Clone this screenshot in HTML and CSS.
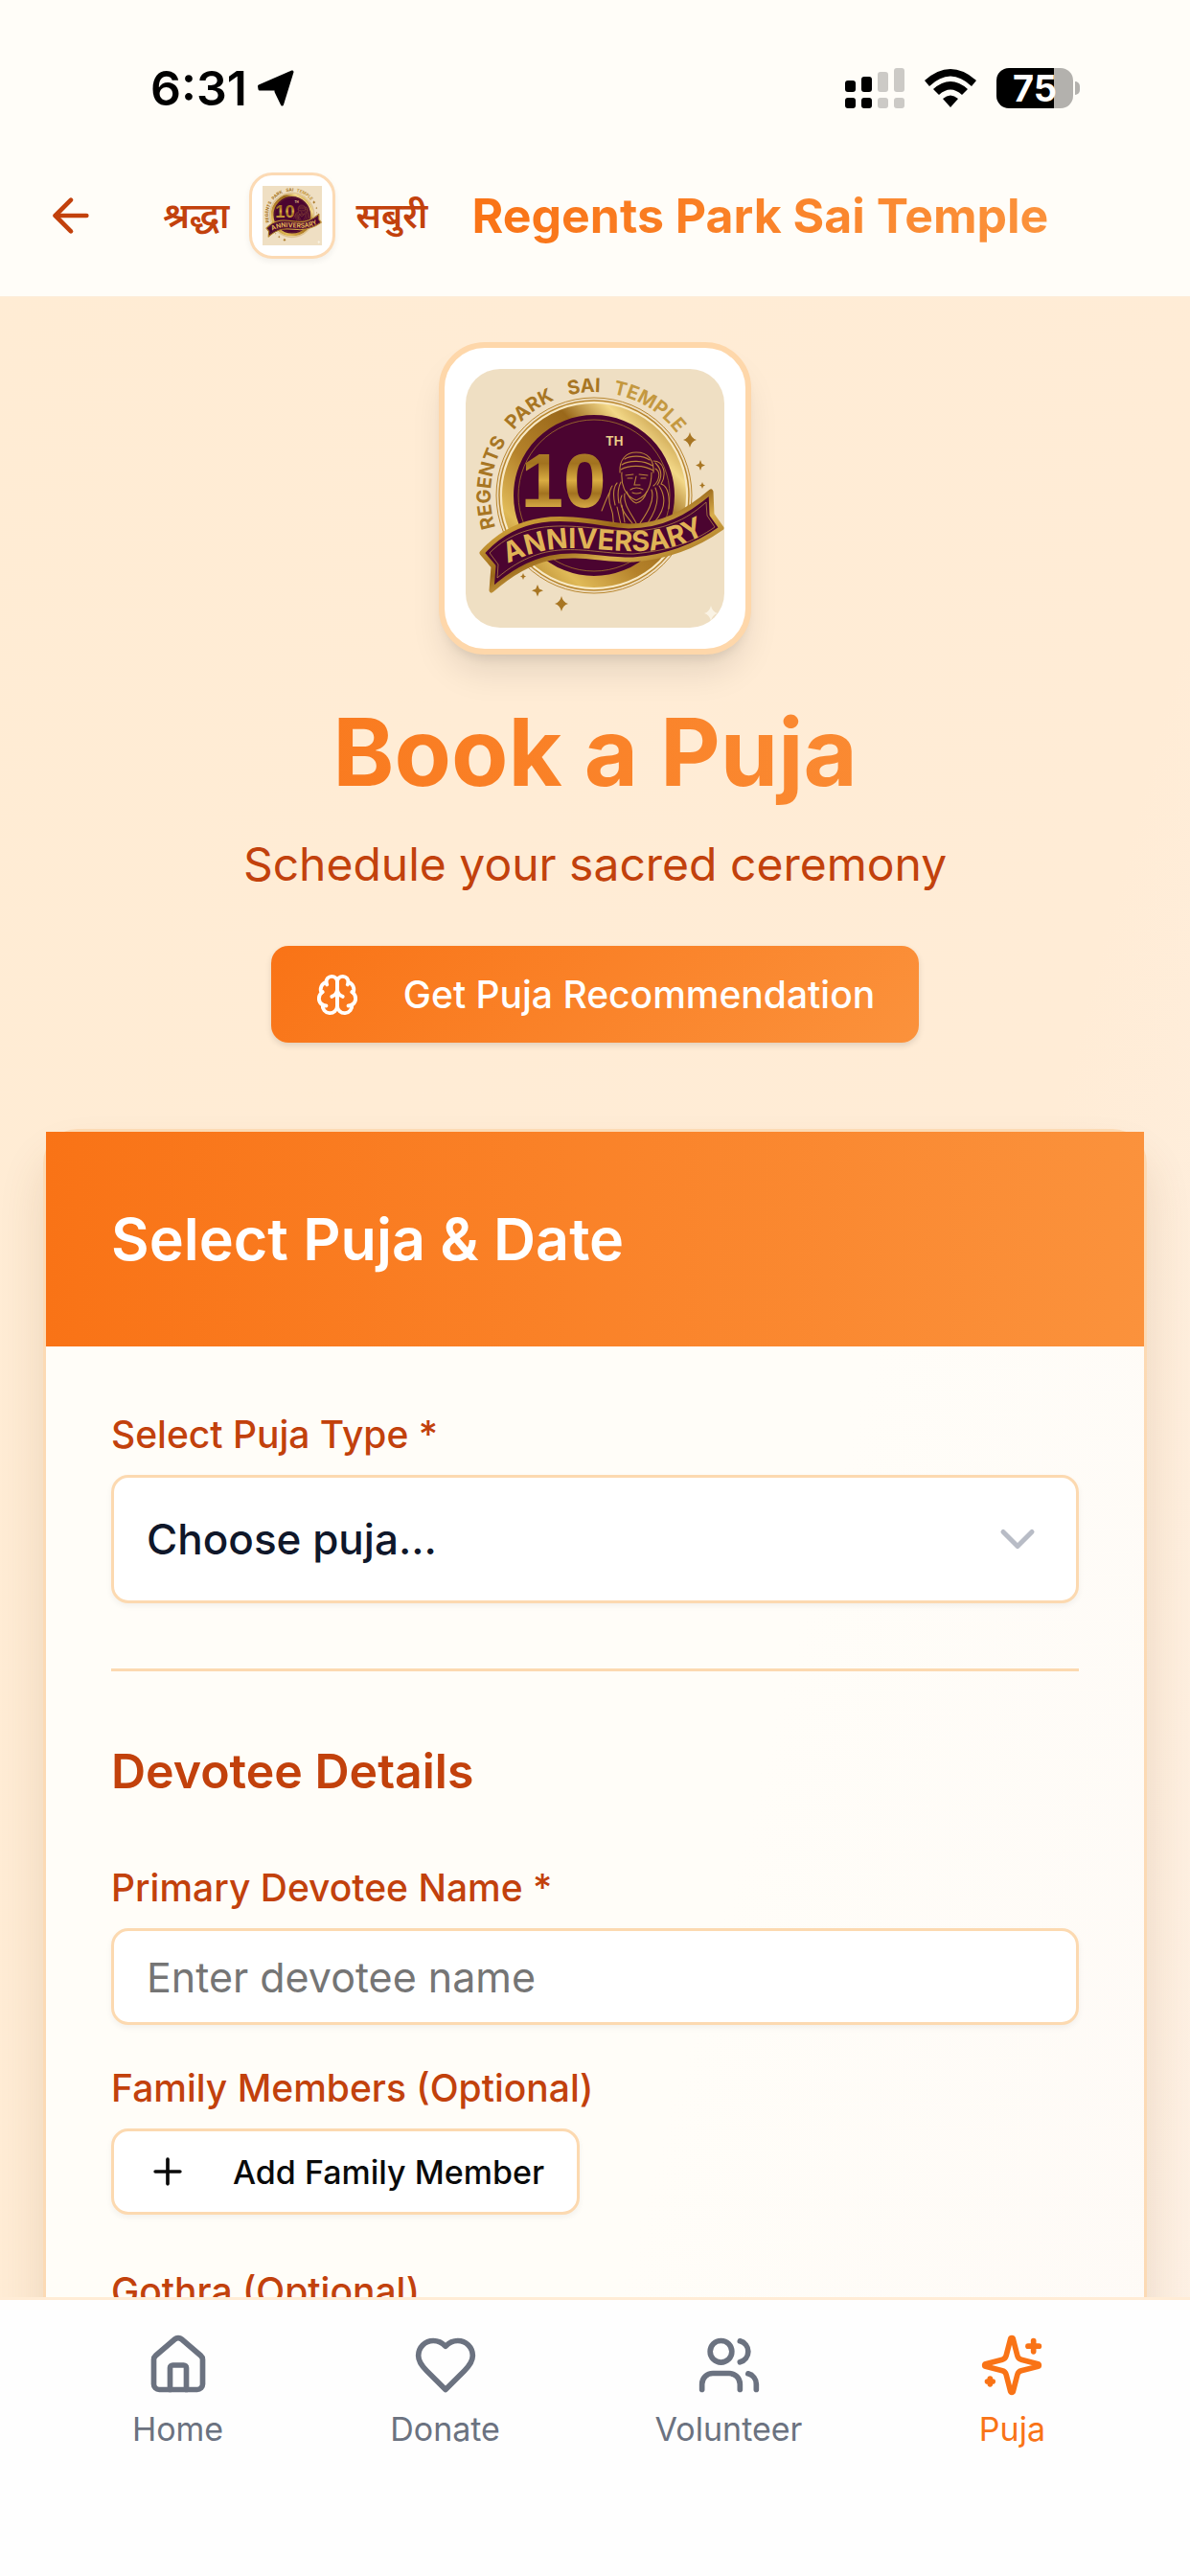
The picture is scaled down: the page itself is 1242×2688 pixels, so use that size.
FILE: index.html
```html
<!DOCTYPE html>
<html lang="en">
<head>
    <meta charset="UTF-8">
    <meta name="viewport" content="width=device-width, initial-scale=1.0">
    <title>Book a Puja - Regents Park Sai Temple</title>
    <link rel="stylesheet" href="styles.css">
</head>
<body>
    <header class="app-header">
        <div class="status-bar">
            <div class="status-left">
                <span class="time">6:31</span>
                <svg class="location" viewBox="0 0 40 40"><path d="M37 3L26.500 37L20 23.500V21H3L2.500 18Z" fill="#000" stroke="#000" stroke-width="3" stroke-linejoin="round"/></svg>
            </div>
            <div class="status-right">
                <svg class="signal" viewBox="0 0 62 42">
                    <g fill="#000">
                        <rect y="13" width="11" height="12" rx="3"/><rect x="17" y="9" width="11" height="16" rx="3"/>
                        <rect y="31" width="11" height="11" rx="3"/><rect x="17" y="31" width="11" height="11" rx="3"/>
                    </g>
                    <g fill="#cccac6">
                        <rect x="34" y="4" width="11" height="21" rx="3"/><rect x="51" width="11" height="25" rx="3"/>
                        <rect x="34" y="31" width="11" height="11" rx="3"/><rect x="51" y="31" width="11" height="11" rx="3"/>
                    </g>
                </svg>
                <svg class="wifi" viewBox="0 0 54 40">
                    <path d="M0 12Q27-12 54 12L49 18Q27-3 5 18ZM9 21Q27 5 45 21L39 27Q27 16 15 27ZM19 31Q27 24 35 31L27 40Z"/>
                </svg>
                <div class="battery"><span class="battery-level">75</span></div>
            </div>
        </div>
        <div class="header-row">
            <button class="back" type="button" aria-label="Back">
                <svg class="icon" viewBox="0 0 24 24"><path d="m12 19-7-7 7-7"/><path d="M19 12H5"/></svg>
            </button>
            <div class="brand">
                <span class="motto" lang="hi">श्रद्धा</span>
                <span class="brand-logo"><svg viewBox="0 0 270 270"><use href="#logo"/></svg></span>
                <span class="motto" lang="hi">सबुरी</span>
            </div>
            <span class="temple-name">Regents Park Sai Temple</span>
        </div>
    </header>

    <main class="content">
        <section class="hero">
            <div class="hero-logo">
                <svg viewBox="0 0 270 270" role="img" aria-label="Regents Park Sai Temple 10th Anniversary">
                    <defs>
                        <linearGradient id="gold" x1="0" y1="0" x2="1" y2="1">
                            <stop offset="0" stop-color="#a87420"/>
                            <stop offset="0.25" stop-color="#c99a35"/>
                            <stop offset="0.45" stop-color="#9a681a"/>
                            <stop offset="0.6" stop-color="#d9ae4c"/>
                            <stop offset="0.8" stop-color="#a06f1c"/>
                            <stop offset="1" stop-color="#c4952f"/>
                        </linearGradient>
                        <linearGradient id="goldRing" x1="0" y1="1" x2="1" y2="0">
                            <stop offset="0" stop-color="#a5731d"/>
                            <stop offset="0.2" stop-color="#e0ba58"/>
                            <stop offset="0.4" stop-color="#b5822a"/>
                            <stop offset="0.65" stop-color="#9a681a"/>
                            <stop offset="0.8" stop-color="#f3d888"/>
                            <stop offset="1" stop-color="#a5731d"/>
                        </linearGradient>
                        <linearGradient id="goldNumber" x1="0" y1="0" x2="0" y2="1">
                            <stop offset="0" stop-color="#b98b34"/>
                            <stop offset="0.3" stop-color="#a2721f"/>
                            <stop offset="0.5" stop-color="#d9ac42"/>
                            <stop offset="0.65" stop-color="#a2721f"/>
                            <stop offset="0.85" stop-color="#e0b54c"/>
                            <stop offset="1" stop-color="#b08029"/>
                        </linearGradient>
                        <path id="nameArc" d="M32.500 169A108 108 0 1 1 235.500 169"/>
                        <path id="ribbonLine" d="M46 202C88 182 120 187 150 189C185 192 215 190 248 173"/>
                        <path id="star" d="M0-8Q1.500-1.500 7 0Q1.500 1.500 0 8Q-1.500 1.500-7 0Q-1.500-1.500 0-8Z"/>
                    </defs>
                    <g id="logo">
                        <rect width="270" height="270" fill="#efdfc3"/>
                        <circle cx="134" cy="132" r="99" fill="#f8e9c4" stroke="#b8862f" stroke-width="1.500"/>
                        <circle cx="134" cy="132" r="102" fill="none" stroke="#b8862f"/>
                        <circle cx="134" cy="132" r="90" fill="#4b0430" stroke="url(#goldRing)" stroke-width="12"/>
                        <circle cx="134" cy="132" r="79" fill="none" stroke="#a5762c" stroke-width="0.800"/>
                        <g class="logo-name" fill="#a87623">
                            <text text-anchor="middle"><textPath href="#nameArc" startOffset="51">REGENTS</textPath></text>
                            <text text-anchor="middle"><textPath href="#nameArc" startOffset="138">PARK</textPath></text>
                            <text text-anchor="middle"><textPath href="#nameArc" startOffset="197">SAI</textPath></text>
                            <text text-anchor="middle" fill="#c4983f"><textPath href="#nameArc" startOffset="267">TEMPLE</textPath></text>
                        </g>
                        <text class="logo-number" x="102" y="144" text-anchor="middle" fill="url(#goldNumber)">10</text>
                        <text class="logo-th" x="146" y="80" fill="#ecd08a">TH</text>
                        <g fill="none" stroke="#b98339" stroke-width="1.100" stroke-linecap="round">
                            <path d="M161 108C160 94 168 87 178 87C190 87 197 95 196 108"/>
                            <path d="M163 100C170 95 186 95 195 101M162 105C170 100 186 100 196 106M166 94C172 90 185 90 192 95"/>
                            <path d="M163 108C162 122 167 133 178 137C189 133 194 122 194 108"/>
                            <path d="M167 111L175 110M181 110L190 111M169 114H174M183 114H188M178 112L176 121H182M172 126Q178 122 185 126M174 129Q178 131 183 129"/>
                            <path d="M168 128Q172 138 178 140Q186 138 189 128"/>
                            <path d="M196 96C207 96 210 110 204 120C212 122 213 136 212 146M198 104C205 108 201 118 196 122M198 98C204 104 206 112 200 121"/>
                            <path d="M163 132C158 142 168 154 174 161M166 130C164 142 174 152 178 161M194 126C198 138 188 152 182 161M198 124C204 138 196 152 190 161M202 122C212 138 204 152 197 160"/>
                            <path d="M152 146C148 136 150 126 153 122M156 142C153 130 155 122 158 119M160 140C158 130 160 122 162 118M146 138L150 129M152 146C156 156 152 160 156 164M158 144L162 162M163 142L166 160M142 148L146 138"/>
                        </g>
                        <path d="M17 192C65 138 125 161 170 164C205 164 230 150 256 128L257 152L267 166C243 183 215 196 175 199C125 200 88 177 27 231L29 206Z" fill="#4b0430" stroke="url(#gold)" stroke-width="5" stroke-linejoin="round"/>
                        <path d="M25 192C68 149 125 168 170 169C206 169 230 158 251 139L252 153L260 165C237 181 215 189 175 193C125 193 86 173 33 218L34 204Z" fill="none" stroke="#b08043" stroke-width="0.800"/>
                        <text class="logo-ribbon" fill="#e0b356" text-anchor="middle"><textPath href="#ribbonLine" startOffset="50%">ANNIVERSARY</textPath></text>
                        <g fill="#a87623">
                            <use href="#star" x="234" y="74"/>
                            <path d="M245 95l1.500 4 3.500 1.500-3.500 1.500-1.500 4-1.500-4-3.500-1.500 3.500-1.500z"/>
                            <path d="M247 118l1 2.500 2 1-2 1-1 2.500-1-2.500-2-1 2-1z"/>
                            <use href="#star" x="100" y="245"/>
                            <path d="M75 225l1.800 4.500 4.200 1.800-4.200 1.800-1.800 4.500-1.800-4.500-4.200-1.800 4.200-1.800z"/>
                            <path d="M60 213l1 2.500 2 1-2 1-1 2.500-1-2.500-2-1 2-1z"/>
                        </g>
                        <use href="#star" x="256" y="255" fill="#faf3e4"/>
                    </g>
                </svg>
            </div>
            <h1>Book a Puja</h1>
            <p>Schedule your sacred ceremony</p>
            <button class="recommend" type="button">
                <svg class="icon" viewBox="0 0 24 24">
                    <path d="M12 5a3 3 0 1 0-5.997.125 4 4 0 0 0-2.526 5.770 4 4 0 0 0 .556 6.588A4 4 0 1 0 12 18Z"/>
                    <path d="M12 5a3 3 0 1 1 5.997.125 4 4 0 0 1 2.526 5.770 4 4 0 0 1-.556 6.588A4 4 0 1 1 12 18Z"/>
                    <path d="M15 13a4.500 4.500 0 0 1-3-4 4.500 4.500 0 0 1-3 4"/>
                    <path d="M17.599 6.500a3 3 0 0 0 .399-1.375"/><path d="M6.003 5.125A3 3 0 0 0 6.401 6.500"/>
                    <path d="M3.477 10.896a4 4 0 0 1 .585-.396"/><path d="M19.938 10.500a4 4 0 0 1 .585.396"/>
                    <path d="M6 18a4 4 0 0 1-1.967-.516"/><path d="M19.967 17.484A4 4 0 0 1 18 18"/>
                </svg>
                Get Puja Recommendation
            </button>
        </section>

        <form class="card">
            <h2 class="card-header">Select Puja &amp; Date</h2>
            <div class="card-body">
                <label for="pujaType">Select Puja Type *</label>
                <div class="select-wrap">
                    <select id="pujaType" name="pujaType" required>
                        <option value="">Choose puja...</option>
                    </select>
                    <svg class="icon chevron" viewBox="0 0 24 24"><path d="m6 9 6 6 6-6"/></svg>
                </div>
                <hr>
                <h3>Devotee Details</h3>
                <label for="devoteeName">Primary Devotee Name *</label>
                <input type="text" id="devoteeName" name="devoteeName" placeholder="Enter devotee name" required>
                <label for="addMember">Family Members (Optional)</label>
                <button class="add-member" id="addMember" type="button">
                    <svg class="icon" viewBox="0 0 24 24"><path d="M5 12h14"/><path d="M12 5v14"/></svg>
                    Add Family Member
                </button>
                <label for="gothra">Gothra (Optional)</label>
                <input type="text" id="gothra" name="gothra">
            </div>
        </form>
    </main>

    <nav class="bottom-nav">
        <a href="#home">
            <svg class="icon" viewBox="0 0 24 24"><path d="M15 21v-8a1 1 0 0 0-1-1h-4a1 1 0 0 0-1 1v8"/><path d="M3 10a2 2 0 0 1 .709-1.528l7-5.999a2 2 0 0 1 2.582 0l7 5.999A2 2 0 0 1 21 10v9a2 2 0 0 1-2 2H5a2 2 0 0 1-2-2z"/></svg>
            Home
        </a>
        <a href="#donate">
            <svg class="icon" viewBox="0 0 24 24"><path d="M19 14c1.490-1.460 3-3.210 3-5.500A5.500 5.500 0 0 0 16.500 3c-1.760 0-3 .5-4.500 2-1.500-1.500-2.740-2-4.500-2A5.500 5.500 0 0 0 2 8.500c0 2.300 1.500 4.050 3 5.500l7 7Z"/></svg>
            Donate
        </a>
        <a href="#volunteer">
            <svg class="icon" viewBox="0 0 24 24"><path d="M16 21v-2a4 4 0 0 0-4-4H6a4 4 0 0 0-4 4v2"/><circle cx="9" cy="7" r="4"/><path d="M22 21v-2a4 4 0 0 0-3-3.870"/><path d="M16 3.130a4 4 0 0 1 0 7.750"/></svg>
            Volunteer
        </a>
        <a href="#puja" class="active">
            <svg class="icon" viewBox="0 0 24 24"><path d="M9.937 15.500A2 2 0 0 0 8.500 14.063l-6.135-1.582a.5.5 0 0 1 0-.962L8.500 9.936A2 2 0 0 0 9.937 8.500l1.582-6.135a.5.5 0 0 1 .963 0L14.063 8.500A2 2 0 0 0 15.500 9.937l6.135 1.581a.5.5 0 0 1 0 .964L15.500 14.063a2 2 0 0 0-1.437 1.437l-1.582 6.135a.5.5 0 0 1-.963 0z"/><path d="M20 3v4"/><path d="M22 5h-4"/><path d="M4 17v2"/><path d="M5 18H3"/></svg>
            Puja
        </a>
    </nav>
</body>
</html>
```
FILE: styles.css
```css
* {
    box-sizing: border-box;
}
body {
    margin: 0;
    height: 100vh;
    display: flex;
    flex-direction: column;
    font-family: Inter, "Noto Sans Devanagari", sans-serif;
    background: linear-gradient(105deg, #ffecd4 0%, #ffecd6 72%, #fdf1e6 100%);
    color: #c2410c;
}
h1, h2, h3, p {
    margin: 0;
}
button, input, select {
    font-family: inherit;
}
.icon {
    flex: none;
    fill: none;
    stroke: currentColor;
    stroke-width: 2;
    stroke-linecap: round;
    stroke-linejoin: round;
}

/* Header */
.app-header {
    flex: none;
    background: #fffdf8;
    border-bottom: 1px solid #fdeedb;
}
.status-bar {
    display: flex;
    justify-content: space-between;
    align-items: center;
    padding: 62px 115px 19px 157px;
    color: #000;
}
.status-left, .status-right {
    display: flex;
    align-items: center;
    height: 60px;
}
.status-left {
    gap: 10px;
}
.status-right {
    gap: 21px;
}
.time {
    font-size: 50px;
    font-weight: 600;
    line-height: 60px;
}
.location {
    width: 40px;
    height: 40px;
}
.signal {
    width: 62px;
    height: 42px;
}
.wifi {
    width: 54px;
    height: 40px;
}
.battery {
    display: flex;
    align-items: center;
    gap: 2px;
}
.battery::after {
    content: "";
    width: 5px;
    height: 14px;
    border-radius: 0 5px 5px 0;
    background: #b3b1ad;
}
.battery-level {
    width: 80px;
    border-radius: 13px;
    background: linear-gradient(90deg, #000 75%, #b3b1ad 75%);
    color: #fff;
    font-size: 38px;
    font-weight: 700;
    line-height: 42px;
    text-align: center;
}
.header-row {
    display: flex;
    align-items: center;
    padding: 39px 46px;
}
.back {
    display: flex;
    padding: 0;
    border: 0;
    background: none;
    color: #c2410c;
}
.back svg {
    width: 56px;
    height: 56px;
}
.brand {
    display: flex;
    align-items: center;
    gap: 21px;
    margin: 0 46px 0 68px;
}
.motto {
    font-size: 37px;
    font-weight: 600;
    line-height: 60px;
}
.brand-logo {
    display: flex;
    padding: 11px;
    border: 3px solid #fcdab4;
    border-radius: 24px;
    background: #fff;
    box-shadow: 0 3px 6px rgba(0, 0, 0, 0.06);
}
.brand-logo svg {
    width: 62px;
    height: 62px;
}
.temple-name {
    font-size: 50px;
    font-weight: 700;
    line-height: 60px;
    white-space: nowrap;
    background: linear-gradient(90deg, #f97316, #fb923c);
    -webkit-background-clip: text;
    background-clip: text;
    color: transparent;
}

/* Content */
.content {
    flex: 1;
    min-height: 0;
    overflow: hidden;
    padding: 47px 45px 0;
}
.hero {
    display: flex;
    flex-direction: column;
    align-items: center;
}
.hero-logo {
    display: flex;
    padding: 22px;
    border: 6px solid #fed7aa;
    border-radius: 48px;
    background: #fff;
    box-shadow: 0 24px 36px -6px rgba(0, 0, 0, 0.1), 0 9px 12px -6px rgba(0, 0, 0, 0.1);
}
.hero-logo svg {
    width: 270px;
    height: 270px;
    border-radius: 36px;
}
h1 {
    align-self: stretch;
    margin-top: 42px;
    font-size: 97px;
    font-weight: 700;
    line-height: 120px;
    text-align: center;
    background: linear-gradient(90deg, #f97316, #fb923c);
    -webkit-background-clip: text;
    background-clip: text;
    color: transparent;
}
.hero p {
    margin: 21px 0 49px;
    font-size: 48px;
    line-height: 72px;
}
.recommend {
    display: flex;
    align-items: center;
    gap: 46px;
    height: 101px;
    padding: 0 46px;
    border: 0;
    border-radius: 18px;
    background: linear-gradient(135deg, #f97316, #fb923c);
    box-shadow: 0 3px 6px rgba(0, 0, 0, 0.12);
    color: #fff;
    font-size: 39px;
    font-weight: 500;
}
.recommend svg {
    width: 46px;
    height: 46px;
}

/* Booking card */
.card {
    margin-top: 90px;
    border: 3px solid #fcdab4;
    border-radius: 36px;
    background: linear-gradient(105deg, #fffdf8 60%, #fefaf6);
    box-shadow: 0 30px 48px rgba(120, 70, 20, 0.14);
}
.card-header {
    padding: 72px 68px;
    background: linear-gradient(90deg, #f97316, #fb923c);
    color: #fff;
    font-size: 61px;
    font-weight: 600;
    line-height: 80px;
}
.card-body {
    display: flex;
    flex-direction: column;
    padding: 62px 68px;
}
label {
    font-size: 39px;
    font-weight: 500;
    line-height: 60px;
    margin-bottom: 12px;
}
select, input, .add-member {
    border: 3px solid #fcd9b0;
    border-radius: 18px;
    background: #fff;
    box-shadow: 0 3px 6px rgba(0, 0, 0, 0.05);
}
.select-wrap {
    display: grid;
    align-items: center;
}
.select-wrap > * {
    grid-area: 1 / 1;
}
select {
    appearance: none;
    width: 100%;
    height: 134px;
    padding: 0 34px;
    color: #0f172a;
    font-size: 44px;
    font-weight: 500;
}
.chevron {
    justify-self: end;
    width: 60px;
    height: 60px;
    margin-right: 34px;
    color: #b8bcc6;
    pointer-events: none;
}
hr {
    width: 100%;
    height: 3px;
    margin: 68px 0;
    border: 0;
    background: #fcd9b0;
}
h3 {
    margin-bottom: 56px;
    font-size: 50px;
    font-weight: 600;
    line-height: 72px;
}
input {
    height: 101px;
    margin-bottom: 36px;
    padding: 0 34px;
    font-size: 43px;
}
input::placeholder {
    color: #757575;
}
.add-member {
    align-self: flex-start;
    display: flex;
    align-items: center;
    gap: 46px;
    height: 90px;
    margin-bottom: 50px;
    padding: 0 34px;
    color: #0a0a0a;
    font-size: 34px;
    font-weight: 500;
}
.add-member svg {
    width: 44px;
    height: 44px;
}

/* Bottom navigation */
.bottom-nav {
    flex: none;
    display: flex;
    justify-content: space-around;
    padding: 34px 46px 129px;
    border-top: 3px solid #ffecd6;
    background: #fefefe;
}
.bottom-nav a {
    display: flex;
    flex-direction: column;
    align-items: center;
    gap: 9px;
    min-width: 192px;
    padding: 0 36px;
    color: #6b7280;
    font-size: 34px;
    line-height: 48px;
    text-decoration: none;
}
.bottom-nav svg {
    width: 68px;
    height: 68px;
}
.bottom-nav .active {
    color: #f97316;
}

/* Logo lettering */
.logo-name {
    font-size: 20px;
    font-weight: 700;
}
.logo-number {
    font-family: "Liberation Sans", Arial, sans-serif;
    font-size: 80px;
    font-weight: 700;
}
.logo-th {
    font-size: 13px;
    font-weight: 700;
}
.logo-ribbon {
    font-size: 29px;
    font-weight: 700;
}
```
